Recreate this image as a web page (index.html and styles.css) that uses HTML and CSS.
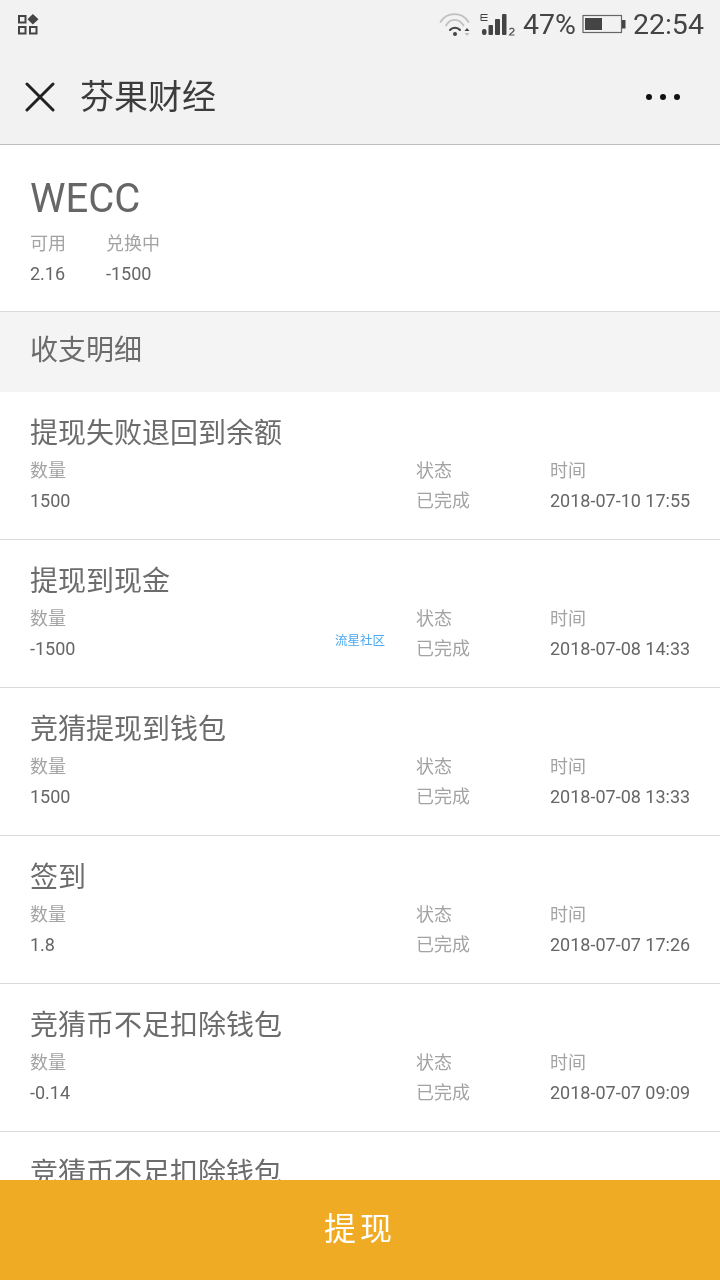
FILE: index.html
```html
<!DOCTYPE html>
<html lang="zh">
<head>
<meta charset="utf-8">
<title>芬果财经</title>
<link rel="stylesheet" href="styles.css">
</head>
<body>
<div class="top">
  <div class="status">
    <svg class="apps" width="22" height="22" viewBox="0 0 22 22"><g fill="none" stroke="#444" stroke-width="2"><rect x="2" y="3" width="6.500" height="6.500"/><rect x="2" y="14" width="6.500" height="6.500"/><rect x="13" y="14" width="6.500" height="6.500"/></g><path d="M15.800 1 21.500 6.300l-5.700 5.300-5.300-5.300z" fill="#444"/></svg>
    <div class="status-right">
      <svg class="wifi" width="32" height="24" viewBox="0 0 32 24"><g fill="none" stroke-linecap="round"><path d="M1.500 9C8 -1.500 23 -1.500 29.500 9" stroke="#c0c0c0" stroke-width="1.800"/><path d="M7 12.500C11 5 20 5 24.500 12.500" stroke="#c0c0c0" stroke-width="1.800"/><path d="M11 17c2.500-3 7.500-3 10 0" stroke="#444" stroke-width="2"/></g><circle cx="16" cy="21" r="2" fill="#444"/><path d="M25.500 18l2.500-3 2.500 3z" fill="#444"/><path d="M25.500 20l2.500 3 2.500-3z" fill="#c0c0c0"/></svg>
      <svg class="signal" width="36" height="26" viewBox="0 0 36 26"><path d="M1 2.500h6.500M1 5.500h6.500M1 8.500h6.500M1 2.500v6" stroke="#444" stroke-width="1" fill="none"/><rect x="2" y="17" width="4.500" height="6" rx="2" fill="#444"/><rect x="8.500" y="13" width="4.500" height="10" rx="1" fill="#444"/><rect x="15" y="7" width="5" height="16" rx="1" fill="#444"/><rect x="22" y="2" width="4.500" height="21" rx="1" fill="#444"/><path d="M29.500 17.500c1-1.800 5-1.300 4.500 1 -.3 1.300-3.500 2.500-4.500 4.500h5" fill="none" stroke="#555" stroke-width="1.200"/></svg>
      <span class="pct">47%</span>
      <svg class="battery" width="44" height="22" viewBox="0 0 44 22"><rect x="1" y="2.500" width="38.500" height="17" fill="none" stroke="#666" stroke-width="1.200"/><rect x="3" y="5" width="17" height="12" fill="#444"/><rect x="40" y="7" width="3.500" height="8.500" fill="#444"/></svg>
      <span class="clock">22:54</span>
    </div>
  </div>
  <header class="nav">
    <svg class="close" width="30" height="30" viewBox="0 0 30 30"><path d="M2 2 28 28M28 2 2 28" stroke="#222" stroke-width="3" stroke-linecap="round"/></svg>
    <h1 class="nav-title">芬果财经</h1>
    <div class="dots"><i></i><i></i><i></i></div>
  </header>
</div>

<section class="summary">
  <h2 class="coin">WECC</h2>
  <div class="balances">
    <div class="col"><span class="label">可用</span><span class="value">2.16</span></div>
    <div class="col"><span class="label">兑换中</span><span class="value">-1500</span></div>
  </div>
</section>

<div class="section-title"><span class="section-text">收支明细</span></div>

<ul class="list">
  <li class="item">
    <div class="item-title">提现失败退回到余额</div>
    <div class="item-grid">
      <span class="label">数量</span><span class="label">状态</span><span class="label">时间</span>
      <span class="value">1500</span><span class="value">已完成</span><span class="value">2018-07-10 17:55</span>
    </div>
  </li>
  <li class="item">
    <div class="item-title">提现到现金</div>
    <div class="item-grid">
      <span class="label">数量</span><span class="label">状态</span><span class="label">时间</span>
      <span class="value">-1500</span><span class="value">已完成</span><span class="value">2018-07-08 14:33</span>
    </div>
    <span class="watermark">流星社区</span>
  </li>
  <li class="item">
    <div class="item-title">竞猜提现到钱包</div>
    <div class="item-grid">
      <span class="label">数量</span><span class="label">状态</span><span class="label">时间</span>
      <span class="value">1500</span><span class="value">已完成</span><span class="value">2018-07-08 13:33</span>
    </div>
  </li>
  <li class="item">
    <div class="item-title">签到</div>
    <div class="item-grid">
      <span class="label">数量</span><span class="label">状态</span><span class="label">时间</span>
      <span class="value">1.8</span><span class="value">已完成</span><span class="value">2018-07-07 17:26</span>
    </div>
  </li>
  <li class="item">
    <div class="item-title">竞猜币不足扣除钱包</div>
    <div class="item-grid">
      <span class="label">数量</span><span class="label">状态</span><span class="label">时间</span>
      <span class="value">-0.14</span><span class="value">已完成</span><span class="value">2018-07-07 09:09</span>
    </div>
  </li>
  <li class="item">
    <div class="item-title">竞猜币不足扣除钱包</div>
  </li>
</ul>

<button class="withdraw"><span class="withdraw-text">提现</span></button>
</body>
</html>
```

FILE: styles.css
```css
* { box-sizing: border-box; margin: 0; padding: 0; }
html, body { height: 1280px; overflow: hidden; }
body {
  background: #fff;
  font-family: Roboto, "Noto Sans CJK SC", sans-serif;
  color: #666;
}
.summary, .list, .status-right, .nav-title, .section-text, .withdraw-text { will-change: transform; }
.top { background: #f2f2f2; height: 145px; border-bottom: 1px solid #bdbdbd; }
.status { height: 48px; display: flex; justify-content: space-between; align-items: center; padding: 1px 16px 0 17px; }
.apps { display: block; margin-bottom: 2px; }
.status-right { display: flex; align-items: center; }
.wifi { margin-right: 9px; }
.signal { margin-right: 7px; }
.pct, .clock { font-size: 28.500px; color: #444; line-height: 48px; }
.battery { margin: 0 7px 2px 6px; }
.nav { height: 96px; display: flex; align-items: center; padding: 1px 25px 0; }
.close { display: block; margin-right: 25px; }
.nav-title { flex: 1; font-size: 34px; font-weight: 400; color: #3c3c3c; line-height: 48px; }
.dots { display: flex; gap: 8px; margin-right: 15px; }
.dots i { width: 6px; height: 6px; border-radius: 50%; background: #111; }

.summary { height: 167px; padding: 30px 30px 0; border-bottom: 1px solid #d9d9d9; }
.coin { font-size: 40px; font-weight: 400; line-height: 48px; color: #666; }
.balances { display: flex; gap: 40px; margin-top: 8px; }
.col { display: flex; flex-direction: column; }
.label { font-size: 18px; line-height: 26px; color: #a3a3a3; }
.value { font-size: 18px; line-height: 26px; color: #666; margin-top: 4px; white-space: nowrap; }

.section-title { height: 80px; background: #f4f4f4; padding: 18px 30px 0; font-size: 28px; line-height: 42px; color: #6c6c6c; }
.section-text { display: block; }

.list { list-style: none; }
.item { position: relative; height: 148px; padding: 22px 30px 0; border-bottom: 1px solid #d9d9d9; }
.item-title { font-size: 28px; line-height: 40px; color: #6c6c6c; }
.item-grid { display: grid; grid-template-columns: 386px 134px 1fr; margin-top: 4px; }
.item-grid .value { margin-top: 4px; }
.item-grid .value:nth-child(5) { color: #a3a3a3; }
.watermark { position: absolute; left: 335px; top: 93px; font-size: 12.500px; line-height: 16px; color: #4aa8f0; }

.withdraw {
  position: fixed; left: 0; right: 0; bottom: 0; height: 100px;
  padding-bottom: 8px;
  border: 0; background: #f0ab24; color: #fff;
  font-family: inherit; font-size: 32px; letter-spacing: 4px;
}
.withdraw-text { display: block; }
```
